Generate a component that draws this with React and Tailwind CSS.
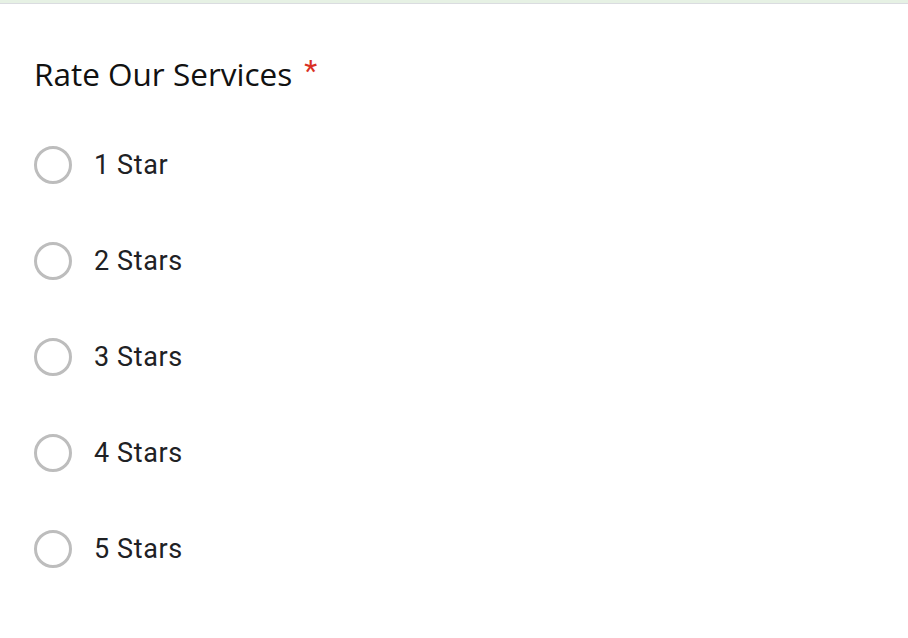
export default function App() {
  const options = ["1 Star", "2 Stars", "3 Stars", "4 Stars", "5 Stars"];

  return (
    <div className="w-[908px] h-[638px] bg-white overflow-hidden">
      <div className="h-[3px] bg-[#e6f1e4]" />
      <div className="h-[1px] bg-[#dadce0]" />
      <div className="pl-[34px] pt-[50px]">
        <div className="flex items-start text-[31.5px] leading-[40px] text-[#111] font-['Open_Sans',sans-serif]">
          <span>Rate Our Services</span>
          <span className="ml-[12px] text-[#d93025] text-[30px] leading-[34px] font-['Roboto',sans-serif]">*</span>
        </div>
        <div className="mt-[52px] flex flex-col gap-[58px]">
          {options.map((o) => (
            <label key={o} className="flex items-center gap-[22px] cursor-pointer">
              <span className="w-[38px] h-[38px] rounded-full border-[3px] border-[#bdbdbd] shrink-0" />
              <span className="text-[27px] leading-[38px] tracking-[0.6px] text-[#202124] font-['Roboto',sans-serif]">
                {o}
              </span>
            </label>
          ))}
        </div>
      </div>
    </div>
  );
}
